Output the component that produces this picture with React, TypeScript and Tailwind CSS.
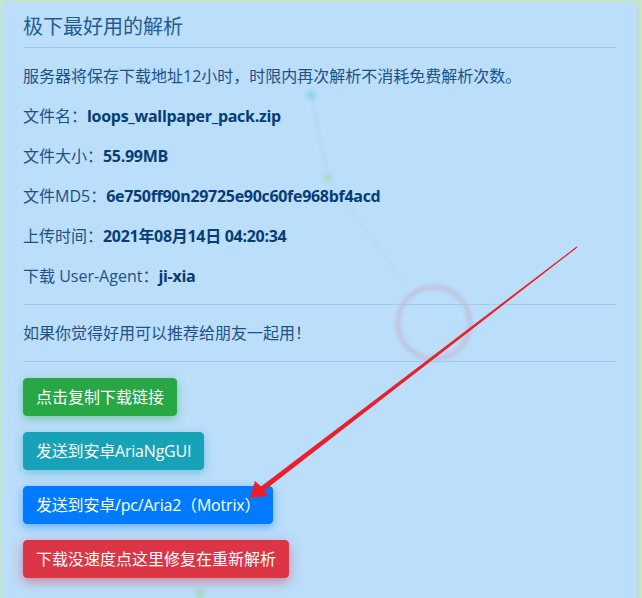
import React from "react";

const font = { fontFamily: '"Open Sans", "Noto Sans CJK SC", sans-serif' };

function Row({ label, value }: { label: string; value: string }) {
  return (
    <p className="mt-4 text-[16px] leading-6">
      {label}
      <b className="font-bold tracking-[-0.3px] text-[#073c74]">{value}</b>
    </p>
  );
}

export default function App() {
  return (
    <div
      className="relative h-[598px] w-[642px] overflow-hidden bg-[#c8e6c9] pl-[2px] pt-[2px]"
      style={font}
    >
      <div className="relative w-[635px] rounded-[4px] bg-[#bbdefb] px-[21px] pb-[40px] pt-[13px] text-[#1d5189] shadow-[1px_0_4px_rgba(0,0,0,0.06)]">
        {/* background particle canvas seen through the card */}
        <svg
          className="pointer-events-none absolute left-[-2px] top-[-2px]"
          width="642"
          height="620"
          viewBox="0 0 642 620"
        >
          <defs>
            <filter id="blur1" x="-50%" y="-50%" width="200%" height="200%">
              <feGaussianBlur stdDeviation="1.2" />
            </filter>
            <filter id="blur2" x="-50%" y="-50%" width="200%" height="200%">
              <feGaussianBlur stdDeviation="2" />
            </filter>
          </defs>
          <line x1="311" y1="95" x2="328" y2="178" stroke="#a5d6c8" strokeWidth="1.2" opacity="0.6" filter="url(#blur1)" />
          <line x1="328" y1="178" x2="405" y2="284" stroke="#aecfe6" strokeWidth="1.2" opacity="0.5" filter="url(#blur1)" />
          <circle cx="311" cy="95" r="5" fill="#8fd3f0" filter="url(#blur2)" />
          <circle cx="328" cy="178" r="4" fill="#a6dcc4" filter="url(#blur2)" />
          <circle cx="434" cy="323" r="36" fill="none" stroke="#c6a6bc" strokeWidth="4" opacity="0.6" filter="url(#blur2)" />
          <circle cx="200" cy="594" r="5" fill="#a6dcc4" filter="url(#blur2)" />
        </svg>

        <div className="relative">
          <h5 className="border-b border-[#9ccbf3] pb-2 text-[20px] font-normal leading-6 text-[#245a91]">
            极下最好用的解析
          </h5>
          <p className="mt-4 text-[16px] leading-6">
            服务器将保存下载地址12小时，时限内再次解析不消耗免费解析次数。
          </p>
          <Row label="文件名：" value="loops_wallpaper_pack.zip" />
          <Row label="文件大小：" value="55.99MB" />
          <Row label="文件MD5：" value="6e750ff90n29725e90c60fe968bf4acd" />
          <Row label="上传时间：" value="2021年08月14日 04:20:34" />
          <Row label="下载 User-Agent：" value="ji-xia" />
          <div className="mt-4 h-px bg-[#9ccbf3]" />
          <p className="mt-4 text-[16px] leading-6">如果你觉得好用可以推荐给朋友一起用！</p>
          <div className="mt-4 h-px bg-[#9ccbf3]" />
          <div className="mt-4 flex flex-col items-start gap-4">
            <button className="h-[38px] rounded-[4px] border border-[#28a745] bg-[#28a745] px-3 text-[16px] leading-6 text-white shadow-[0_3px_10px_rgba(40,167,69,0.45)]">
              点击复制下载链接
            </button>
            <button className="h-[38px] rounded-[4px] border border-[#17a2b8] bg-[#17a2b8] px-3 text-[16px] leading-6 tracking-[-0.2px] text-white shadow-[0_3px_10px_rgba(23,162,184,0.45)]">
              发送到安卓AriaNgGUI
            </button>
            <button className="h-[38px] rounded-[4px] border border-[#007bff] bg-[#007bff] px-3 text-[16px] leading-6 tracking-[-0.2px] text-white shadow-[0_3px_10px_rgba(0,123,255,0.5)]">
              发送到安卓/pc/Aria2（Motrix）
            </button>
            <button className="h-[38px] rounded-[4px] border border-[#dc3545] bg-[#dc3545] px-3 text-[16px] leading-6 text-white shadow-[0_4px_12px_rgba(220,53,69,0.5)]">
              下载没速度点这里修复在重新解析
            </button>
          </div>
        </div>
      </div>

      {/* red annotation arrow */}
      <svg
        className="pointer-events-none absolute left-0 top-0 z-10"
        width="642"
        height="598"
        viewBox="0 0 642 598"
      >
        <polygon
          points="250,498 255,481 261,486.5 576.6,246.6 577.4,247.4 264.2,490.4 268,496"
          fill="#ea1f2b"
        />
      </svg>
    </div>
  );
}
